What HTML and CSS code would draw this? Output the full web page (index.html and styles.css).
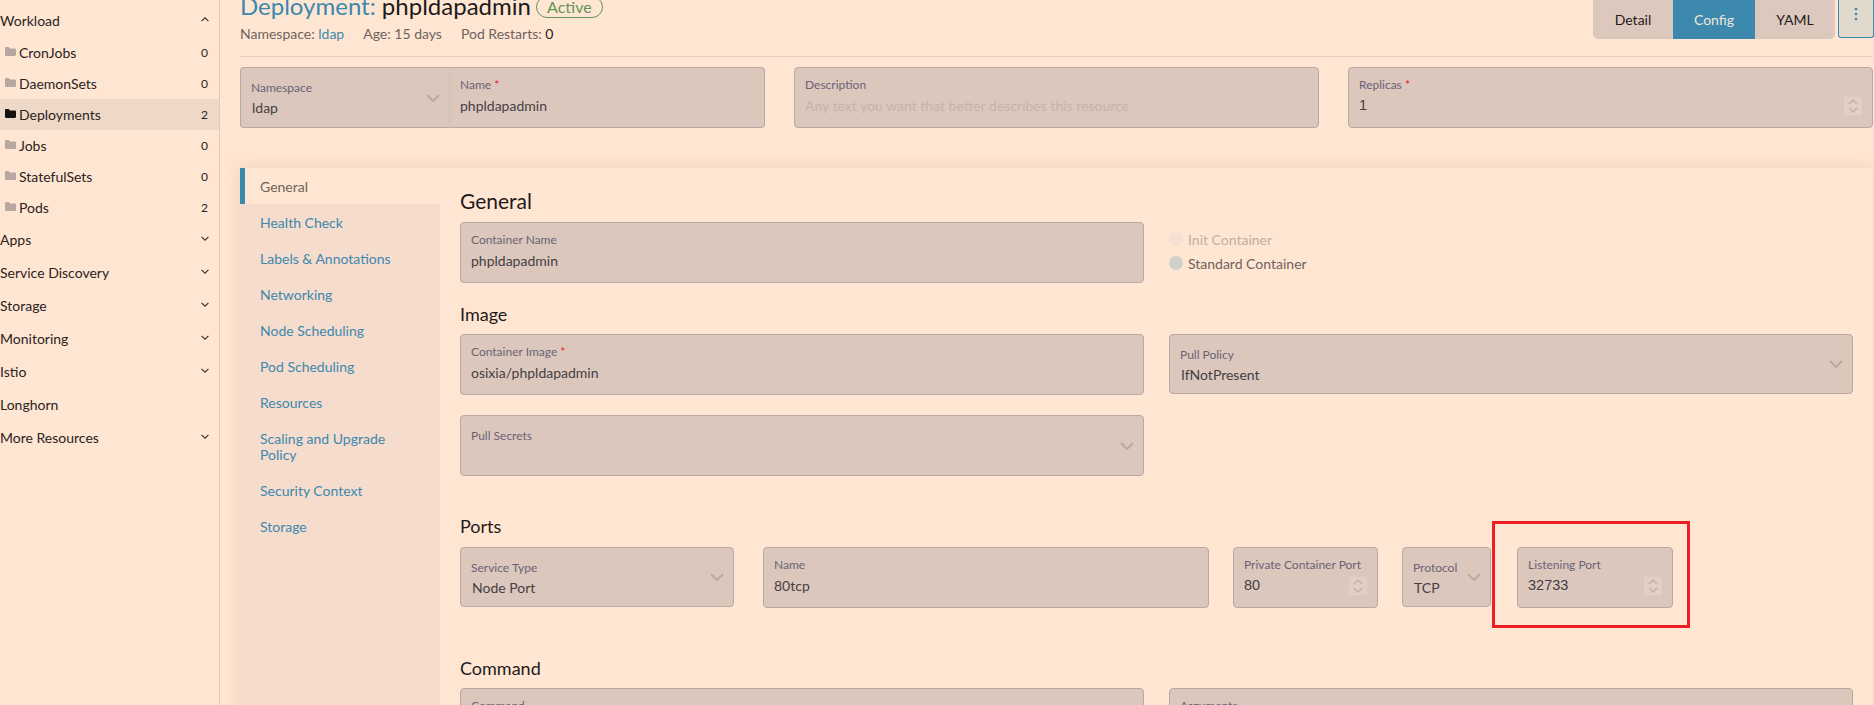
FILE: index.html
```html
<!DOCTYPE html>
<html lang="en">
<head>
    <meta charset="UTF-8">
    <title>Deployment: phpldapadmin</title>
    <link rel="stylesheet" href="styles.css">
</head>
<body>
    <svg class="defs" width="0" height="0">
        <symbol id="folder" viewBox="0 0 11 9"><path d="M0 1.2C0 .5.5 0 1.2 0h2.6l1.2 1.4h4.8c.7 0 1.2.5 1.2 1.2v5.2c0 .7-.5 1.2-1.2 1.2H1.2C.5 9 0 8.500 0 7.800z"/></symbol>
        <symbol id="chev" viewBox="0 0 14 8"><path d="M1 1l6 6 6-6" fill="none" stroke="currentColor" stroke-width="2"/></symbol>
        <symbol id="spin" viewBox="0 0 18 18"><path d="M5 7l4-4 4 4M5 11l4 4 4-4" fill="none" stroke="currentColor" stroke-width="1.500"/></symbol>
    </svg>

    <div class="layout">
        <nav class="sidebar">
            <div class="nav-head">Workload <svg class="nav-chev up"><use href="#chev"/></svg></div>
            <a class="nav-item"><svg class="folder"><use href="#folder"/></svg><span>CronJobs</span><b>0</b></a>
            <a class="nav-item"><svg class="folder"><use href="#folder"/></svg><span>DaemonSets</span><b>0</b></a>
            <a class="nav-item active"><svg class="folder"><use href="#folder"/></svg><span>Deployments</span><b>2</b></a>
            <a class="nav-item"><svg class="folder"><use href="#folder"/></svg><span>Jobs</span><b>0</b></a>
            <a class="nav-item"><svg class="folder"><use href="#folder"/></svg><span>StatefulSets</span><b>0</b></a>
            <a class="nav-item"><svg class="folder"><use href="#folder"/></svg><span>Pods</span><b>2</b></a>
            <div class="nav-head">Apps <svg class="nav-chev"><use href="#chev"/></svg></div>
            <div class="nav-head">Service Discovery <svg class="nav-chev"><use href="#chev"/></svg></div>
            <div class="nav-head">Storage <svg class="nav-chev"><use href="#chev"/></svg></div>
            <div class="nav-head">Monitoring <svg class="nav-chev"><use href="#chev"/></svg></div>
            <div class="nav-head">Istio <svg class="nav-chev"><use href="#chev"/></svg></div>
            <div class="nav-head">Longhorn</div>
            <div class="nav-head">More Resources <svg class="nav-chev"><use href="#chev"/></svg></div>
        </nav>

        <main class="main">
            <header class="page-head">
                <div>
                    <h1><a>Deployment:</a> phpldapadmin <span class="badge">Active</span></h1>
                    <div class="meta">
                        <span>Namespace: <a>ldap</a></span>
                        <span>Age: 15 days</span>
                        <span>Pod Restarts: <b>0</b></span>
                    </div>
                </div>
                <div class="actions">
                    <div class="btn-group">
                        <button>Detail</button>
                        <button class="on">Config</button>
                        <button>YAML</button>
                    </div>
                    <button class="more"><svg width="4" height="14" viewBox="0 0 4 14"><circle cx="2" cy="2" r="1.300"/><circle cx="2" cy="7" r="1.300"/><circle cx="2" cy="12" r="1.300"/></svg></button>
                </div>
            </header>

            <div class="top-row">
                <div class="joined">
                    <div class="field select">
                        <div class="select-text"><label>Namespace</label><div class="value">ldap</div></div>
                        <svg class="chev"><use href="#chev"/></svg>
                    </div>
                    <div class="field">
                        <label>Name <i>*</i></label>
                        <div class="value">phpldapadmin</div>
                    </div>
                </div>
                <div class="field">
                    <label>Description</label>
                    <div class="value placeholder">Any text you want that better describes this resource</div>
                </div>
                <div class="field">
                    <label>Replicas <i>*</i></label>
                    <div class="num-row"><div class="value num">1</div><svg class="spin"><use href="#spin"/></svg></div>
                </div>
            </div>

            <div class="panel">
                <ul class="tabs">
                    <li class="current">General</li>
                    <li>Health Check</li>
                    <li>Labels &amp; Annotations</li>
                    <li>Networking</li>
                    <li>Node Scheduling</li>
                    <li>Pod Scheduling</li>
                    <li>Resources</li>
                    <li>Scaling and Upgrade Policy</li>
                    <li>Security Context</li>
                    <li>Storage</li>
                </ul>

                <div class="body">
                    <h2>General</h2>
                    <div class="two-col">
                        <div class="field">
                            <label>Container Name</label>
                            <div class="value">phpldapadmin</div>
                        </div>
                        <div class="radios">
                            <div class="radio off"><span></span>Init Container</div>
                            <div class="radio"><span></span>Standard Container</div>
                        </div>
                    </div>

                    <h3 class="image-head">Image</h3>
                    <div class="two-col">
                        <div class="field">
                            <label>Container Image <i>*</i></label>
                            <div class="value">osixia/phpldapadmin</div>
                        </div>
                        <div class="field select short">
                            <div class="select-text"><label>Pull Policy</label><div class="value">IfNotPresent</div></div>
                            <svg class="chev"><use href="#chev"/></svg>
                        </div>
                    </div>
                    <div class="two-col secrets">
                        <div class="field select">
                            <div class="select-text"><label>Pull Secrets</label><div class="value">&nbsp;</div></div>
                            <svg class="chev"><use href="#chev"/></svg>
                        </div>
                    </div>

                    <h3 class="ports-head">Ports</h3>
                    <div class="ports">
                        <div class="field select short service-type">
                            <div class="select-text"><label>Service Type</label><div class="value">Node Port</div></div>
                            <svg class="chev"><use href="#chev"/></svg>
                        </div>
                        <div class="field port-name">
                            <label>Name</label>
                            <div class="value">80tcp</div>
                        </div>
                        <div class="field private-port">
                            <label>Private Container Port</label>
                            <div class="num-row"><div class="value num">80</div><svg class="spin"><use href="#spin"/></svg></div>
                        </div>
                        <div class="field select short protocol">
                            <div class="select-text"><label>Protocol</label><div class="value">TCP</div></div>
                            <svg class="chev"><use href="#chev"/></svg>
                        </div>
                        <div class="field listen-port">
                            <label>Listening Port</label>
                            <div class="num-row"><div class="value num">32733</div><svg class="spin"><use href="#spin"/></svg></div>
                            <div class="red-box"></div>
                        </div>
                    </div>

                    <h3 class="command-head">Command</h3>
                    <div class="two-col">
                        <div class="field">
                            <label>Command</label>
                            <div class="value">&nbsp;</div>
                        </div>
                        <div class="field">
                            <label>Arguments</label>
                            <div class="value">&nbsp;</div>
                        </div>
                    </div>
                </div>
            </div>
        </main>
    </div>
</body>
</html>
```

FILE: styles.css
```css
html, body {
    height: 705px;
    overflow: hidden;
}
body {
    margin: 0;
    background: #ffe6d2;
    color: #1f1a1a;
    font-family: Lato, "Open Sans", sans-serif;
    font-size: 14px;
}
.defs {
    display: none;
}
a {
    color: #3d88ad;
}
.layout {
    display: flex;
    height: 705px;
}

/* left nav */
.sidebar {
    width: 219px;
    flex: none;
    border-right: 1px solid #e6c9b8;
    padding-top: 4px;
}
.nav-head {
    height: 33px;
    display: flex;
    align-items: center;
    justify-content: space-between;
    padding-right: 10px;
    color: #2a2322;
}
.nav-chev {
    width: 8px;
    height: 5px;
    margin-top: -3px;
    color: #3b3333;
}
.nav-chev.up {
    transform: rotate(180deg);
}
.nav-item {
    height: 31px;
    display: flex;
    align-items: center;
    padding: 0 11px 0 5px;
    color: #2a2322;
}
.nav-item span {
    flex: 1;
    margin-left: 3px;
}
.nav-item b {
    font-weight: 400;
    font-size: 12px;
}
.nav-item.active {
    background: #eed9c9;
}
.folder {
    width: 11px;
    height: 9px;
    margin-top: -3px;
    fill: #b8a6a0;
}
.active .folder {
    fill: #15110f;
}

/* header */
.main {
    flex: 1;
    min-width: 0;
    margin-top: -10px;
    padding: 0 1px 0 20px;
}
.page-head {
    display: flex;
    justify-content: space-between;
    height: 56px;
    border-bottom: 1px solid #e8cfc2;
    margin-bottom: 10px;
    padding-top: 10px;
}
h1 {
    margin: -10px 0 0;
    font-size: 24px;
    font-weight: 400;
    line-height: 32px;
}
.badge {
    display: inline-block;
    margin-left: -1px;
    font-size: 16px;
    line-height: 20px;
    color: #5f9558;
    border: 1px solid #5f9558;
    border-radius: 11px;
    padding: 0 10px;
    vertical-align: 2px;
}
.meta {
    display: flex;
    gap: 19px;
    margin-top: 2px;
    line-height: 20px;
    color: #6e6360;
}
.meta b {
    font-weight: 400;
    color: #1f1a1a;
}
.actions {
    display: flex;
    gap: 3px;
    align-items: flex-start;
    margin: -1px -1px 0 0;
}
.btn-group {
    display: flex;
    height: 40px;
    border-radius: 0 0 5px 5px;
    overflow: hidden;
}
.btn-group button {
    border: 0;
    background: #dcc8bd;
    font: 14px Lato, sans-serif;
    color: #1f1a1a;
    padding: 0;
    width: 80px;
}
.btn-group button.on {
    width: 82px;
    background: #3d88ad;
    color: #efe6da;
}
.more {
    width: 36px;
    height: 39px;
    padding: 0 0 6px;
    background: #e0d9cc;
    border: 1px solid #3d88ad;
    border-top: 0;
    border-radius: 0 0 3px 3px;
    fill: #3d88ad;
}

/* form fields */
.field {
    position: relative;
    box-sizing: border-box;
    height: 61px;
    padding: 9px 10px;
    background: #dbc7bc;
    border: 1px solid #b9a8a3;
    border-radius: 4px;
}
.field label {
    display: block;
    font-size: 12px;
    line-height: 16px;
    color: #6a6378;
}
.field i {
    color: #e8202a;
    font-style: normal;
}
.value {
    margin-top: 2px;
    line-height: 21px;
    color: #453f45;
}
.placeholder {
    color: #c5b3aa;
}
.num {
    font-family: "Liberation Sans", Arial, sans-serif;
    font-size: 14.5px;
}
.num-row {
    display: flex;
    align-items: center;
    justify-content: space-between;
}
.spin {
    width: 18px;
    height: 18px;
    margin-top: 3px;
    background: #e2d0c4;
    color: #c2b1a8;
}
.select {
    display: flex;
    align-items: center;
    justify-content: space-between;
    padding: 0 10px;
}
.select-text {
    align-self: flex-start;
    margin-top: 12px;
}
.select .value {
    margin: 1px 0 0 1px;
}
.select.short {
    height: 60px;
}
.chev {
    flex: none;
    width: 14px;
    height: 8px;
    margin-right: -1px;
    color: #baa99f;
}

/* top row */
.top-row {
    display: grid;
    grid-template-columns: 525px 525px 1fr;
    gap: 29px;
    margin-top: 10px;
}
.joined {
    display: grid;
    grid-template-columns: 210px 1fr;
}
.joined .field:first-child {
    border-radius: 4px 0 0 4px;
    border-right-color: #d2bfb4;
}
.joined .field:last-child {
    border-radius: 0 4px 4px 0;
    border-left: 0;
}

/* tabbed panel */
.panel {
    display: flex;
    height: 600px;
    margin-top: 40px;
    box-shadow: 0 0 16px rgba(150, 110, 90, .16);
}
.tabs {
    width: 200px;
    flex: none;
    margin: 0;
    padding: 0;
    list-style: none;
    background: #f5dccd;
}
.tabs li {
    padding: 11px 30px 9px 20px;
    line-height: 16px;
    color: #3d88ad;
}
.tabs li.current {
    padding-left: 15px;
    border-left: 5px solid #3d88ad;
    background: #ffe6d2;
    color: #6e6360;
}
.body {
    flex: 1;
    min-width: 0;
    padding: 20px 20px 0;
}
h2, h3 {
    font-weight: 400;
    color: #1f1a1a;
}
h2 {
    margin: 0 0 8px;
    font-size: 21px;
    line-height: 26px;
}
h3 {
    font-size: 18px;
    line-height: 24px;
    margin: 0 0 8px;
}
.image-head {
    margin-top: 19px;
}
.ports-head {
    margin-top: 38px;
    margin-bottom: 9px;
}
.command-head {
    margin-top: 48px;
}
.two-col {
    display: grid;
    grid-template-columns: 1fr 1fr;
    gap: 25px;
}
.secrets {
    margin-top: 20px;
}
.radios {
    padding-top: 5px;
}
.radio {
    display: flex;
    align-items: center;
    gap: 5px;
    height: 24px;
    color: #6e6360;
}
.radio span {
    width: 14px;
    height: 14px;
    border-radius: 50%;
    background: #cdd1c8;
}
.radio.off {
    color: #c1aea5;
}
.radio.off span {
    background: #f5dfd2;
}

/* ports row */
.ports {
    display: flex;
    align-items: flex-start;
}
.service-type {
    width: 274px;
}
.port-name {
    width: 446px;
    margin-left: 29px;
}
.private-port {
    width: 145px;
    margin-left: 24px;
}
.protocol {
    width: 89px;
    margin-left: 24px;
}
.listen-port {
    width: 156px;
    margin-left: 26px;
}
.red-box {
    position: absolute;
    left: -26px;
    top: -27px;
    box-sizing: border-box;
    width: 198px;
    height: 107px;
    border: 3px solid #ee1c25;
}
```
